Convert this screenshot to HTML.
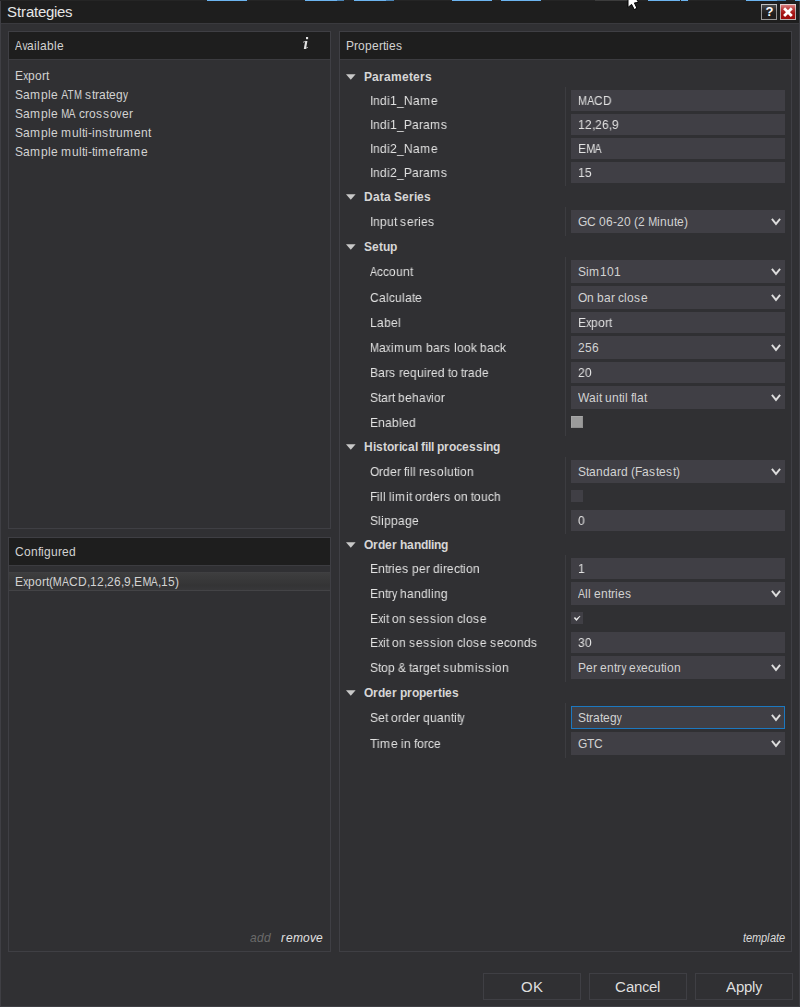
<!DOCTYPE html>
<html><head><meta charset="utf-8"><title>Strategies</title>
<style>
html,body{margin:0;padding:0;}
body{width:800px;height:1007px;overflow:hidden;background:#303033;position:relative;font-family:"Liberation Sans",sans-serif;}
.a{position:absolute;box-sizing:border-box;}
.t{white-space:nowrap;transform-origin:0 0;}
.g{will-change:transform;}
.t b{display:inline-block;font-weight:inherit;white-space:pre;transform-origin:0 0;}
svg{position:absolute;overflow:visible;}
</style></head><body>

<div class="a" style="left:0px;top:0px;width:800px;height:23px;background:#1e1e1e;"></div>
<div class="a" style="left:0px;top:0px;width:800px;height:1px;background:#252525;"></div>
<div class="a" style="left:0px;top:23px;width:800px;height:1px;background:#3a3a3e;"></div>
<div class="a" style="left:0px;top:1px;width:1px;height:1006px;background:#3f3f44;"></div>
<div class="a" style="left:799px;top:1px;width:1px;height:1006px;background:#3f3f44;"></div>
<div class="a" style="left:0px;top:1006px;width:800px;height:1px;background:#3f3f44;"></div>
<div class="a" style="left:207px;top:0px;width:40px;height:1px;background:#6cb4f0;"></div>
<div class="a" style="left:305px;top:0px;width:32px;height:1px;background:#6cb4f0;"></div>
<div class="a" style="left:337px;top:0px;width:7px;height:1px;background:#4a86b8;"></div>
<div class="a" style="left:354px;top:0px;width:32px;height:1px;background:#6cb4f0;"></div>
<div class="a" style="left:386px;top:0px;width:8px;height:1px;background:#4a86b8;"></div>
<div class="a" style="left:452px;top:0px;width:40px;height:1px;background:#6cb4f0;"></div>
<div class="a" style="left:501px;top:0px;width:40px;height:1px;background:#6cb4f0;"></div>
<div class="a" style="left:595px;top:0px;width:33px;height:1px;background:#3c3c3c;"></div>
<div class="a" style="left:648px;top:0px;width:32px;height:1px;background:#6cb4f0;"></div>
<div class="a" style="left:681px;top:0px;width:7px;height:1px;background:#6cb4f0;"></div>
<div class="a" style="left:746px;top:0px;width:31px;height:1px;background:#6cb4f0;"></div>
<div class="a" style="left:777px;top:0px;width:9px;height:1px;background:#4a86b8;"></div>
<div class="a" style="left:795px;top:0px;width:5px;height:1px;background:#6cb4f0;"></div>
<svg style="left:626px;top:0px" width="14" height="11" viewBox="0 0 14 11"><path d="M2 -1 L10.3 -1 L12.6 2.4 L8.4 2.9 L10.9 8.2 L8.3 9.6 L5.6 4.4 L2 7.4 Z" fill="#fff" stroke="#000" stroke-width="1"/></svg>
<div class="a t" style="left:7px;top:3px;height:17px;line-height:17px;font-size:15.4px;color:#e6e6e6;transform:scaleX(0.97403);"><b style="width:10.267px">S</b><b style="width:4.107px">t</b><b style="width:5.133px">r</b><b style="width:8.213px">a</b><b style="width:4.107px">t</b><b style="width:8.213px">e</b><b style="width:8.213px">g</b><b style="width:3.080px">i</b><b style="width:8.213px">e</b><b style="width:8.213px">s</b></div>
<div class="a" style="left:761px;top:4px;width:16px;height:16px;background:linear-gradient(#c4c4c4,#8e8e8e 50%,#9a9a9a);"></div>
<div class="a" style="left:762px;top:5px;width:14px;height:14px;background:linear-gradient(#4c4c4c 0,#2c2a2a 35%,#1e1c1c 70%,#221e1e);"></div>
<div class="a t" style="left:765.6px;top:4px;font-size:13px;line-height:15px;font-weight:bold;color:#fff">?</div>
<div class="a" style="left:780px;top:4px;width:16px;height:16px;background:linear-gradient(#e6d4d4,#b4a4a4 50%,#bcb4b4);"></div>
<div class="a" style="left:781px;top:5px;width:14px;height:14px;background:linear-gradient(#d88080 0,#bc3a3a 30%,#a41414 60%,#9c0c0c);"></div>
<svg style="left:780px;top:4px" width="16" height="16" viewBox="0 0 16 16"><path d="M4.1 4.2 L11.8 11.9 M11.8 4.2 L4.1 11.9" stroke="#fff" stroke-width="2.8" stroke-linecap="butt"/></svg>
<div class="a" style="left:8px;top:31px;width:323px;height:498px;box-shadow:inset 0 0 0 1px #3f3f44;"></div>
<div class="a" style="left:9px;top:32px;width:321px;height:27px;background:#1e1e1e;"></div>
<div class="a" style="left:9px;top:59px;width:321px;height:1px;background:#3c3c40;"></div>
<div class="a t" style="left:15px;top:38px;height:15px;line-height:15px;font-size:13px;color:#d2d2d2;transform:scaleX(0.92308);"><b style="width:7.583px;transform:scaleX(0.875)">A</b><b style="width:5.417px;transform:scaleX(0.833)">v</b><b style="width:7.583px">a</b><b style="width:3.250px">i</b><b style="width:3.250px">l</b><b style="width:7.583px">a</b><b style="width:7.583px">b</b><b style="width:3.250px">l</b><b style="width:7.583px">e</b></div>
<svg style="left:300px;top:34px" width="12" height="18" viewBox="0 0 12 18"><rect x="6" y="3" width="2.1" height="2.2" fill="#e6e6e6"/><path d="M5.2 6.9 L7.4 6.9 L6 15 L3.8 15 Z" fill="#e2e2e2"/><path d="M3 8.3 L5.4 7.3 M5.9 14.2 L7.9 13.3" stroke="#bdbdbd" stroke-width="0.9" fill="none"/></svg>
<div class="a t" style="left:15px;top:68px;height:15px;line-height:15px;font-size:13px;color:#d2d2d2;transform:scaleX(0.92308);"><b style="width:8.667px">E</b><b style="width:5.417px;transform:scaleX(0.833)">x</b><b style="width:7.583px">p</b><b style="width:7.583px">o</b><b style="width:4.333px">r</b><b style="width:3.250px">t</b></div>
<div class="a t" style="left:15px;top:87px;height:15px;line-height:15px;font-size:13px;color:#d2d2d2;transform:scaleX(0.92308);"><b style="width:8.667px">S</b><b style="width:7.583px">a</b><b style="width:11.917px">m</b><b style="width:7.583px">p</b><b style="width:3.250px">l</b><b style="width:7.583px">e</b><b style="width:3.250px">&nbsp;</b><b style="width:7.583px;transform:scaleX(0.875)">A</b><b style="width:6.500px;transform:scaleX(0.819)">T</b><b style="width:8.667px;transform:scaleX(0.800)">M</b><b style="width:3.250px">&nbsp;</b><b style="width:7.583px">s</b><b style="width:3.250px">t</b><b style="width:4.333px">r</b><b style="width:7.583px">a</b><b style="width:3.250px">t</b><b style="width:7.583px">e</b><b style="width:7.583px">g</b><b style="width:5.417px;transform:scaleX(0.833)">y</b></div>
<div class="a t" style="left:15px;top:106px;height:15px;line-height:15px;font-size:13px;color:#d2d2d2;transform:scaleX(0.92308);"><b style="width:8.667px">S</b><b style="width:7.583px">a</b><b style="width:11.917px">m</b><b style="width:7.583px">p</b><b style="width:3.250px">l</b><b style="width:7.583px">e</b><b style="width:3.250px">&nbsp;</b><b style="width:8.667px;transform:scaleX(0.800)">M</b><b style="width:7.583px;transform:scaleX(0.875)">A</b><b style="width:3.250px">&nbsp;</b><b style="width:6.500px">c</b><b style="width:4.333px">r</b><b style="width:7.583px">o</b><b style="width:7.583px">s</b><b style="width:7.583px">s</b><b style="width:7.583px">o</b><b style="width:5.417px;transform:scaleX(0.833)">v</b><b style="width:7.583px">e</b><b style="width:4.333px">r</b></div>
<div class="a t" style="left:15px;top:125px;height:15px;line-height:15px;font-size:13px;color:#d2d2d2;transform:scaleX(0.92308);"><b style="width:8.667px">S</b><b style="width:7.583px">a</b><b style="width:11.917px">m</b><b style="width:7.583px">p</b><b style="width:3.250px">l</b><b style="width:7.583px">e</b><b style="width:3.250px">&nbsp;</b><b style="width:11.917px">m</b><b style="width:7.583px">u</b><b style="width:3.250px">l</b><b style="width:3.250px">t</b><b style="width:3.250px">i</b><b style="width:4.333px">-</b><b style="width:3.250px">i</b><b style="width:7.583px">n</b><b style="width:7.583px">s</b><b style="width:3.250px">t</b><b style="width:4.333px">r</b><b style="width:7.583px">u</b><b style="width:11.917px">m</b><b style="width:7.583px">e</b><b style="width:7.583px">n</b><b style="width:3.250px">t</b></div>
<div class="a t" style="left:15px;top:144px;height:15px;line-height:15px;font-size:13px;color:#d2d2d2;transform:scaleX(0.92308);"><b style="width:8.667px">S</b><b style="width:7.583px">a</b><b style="width:11.917px">m</b><b style="width:7.583px">p</b><b style="width:3.250px">l</b><b style="width:7.583px">e</b><b style="width:3.250px">&nbsp;</b><b style="width:11.917px">m</b><b style="width:7.583px">u</b><b style="width:3.250px">l</b><b style="width:3.250px">t</b><b style="width:3.250px">i</b><b style="width:4.333px">-</b><b style="width:3.250px">t</b><b style="width:3.250px">i</b><b style="width:11.917px">m</b><b style="width:7.583px">e</b><b style="width:3.250px">f</b><b style="width:4.333px">r</b><b style="width:7.583px">a</b><b style="width:11.917px">m</b><b style="width:7.583px">e</b></div>
<div class="a" style="left:8px;top:537px;width:323px;height:415px;box-shadow:inset 0 0 0 1px #3f3f44;"></div>
<div class="a" style="left:9px;top:538px;width:321px;height:27px;background:#1e1e1e;"></div>
<div class="a" style="left:9px;top:565px;width:321px;height:1px;background:#3c3c40;"></div>
<div class="a t" style="left:15px;top:544px;height:15px;line-height:15px;font-size:13px;color:#d2d2d2;transform:scaleX(0.92308);"><b style="width:9.750px">C</b><b style="width:7.583px">o</b><b style="width:7.583px">n</b><b style="width:3.250px">f</b><b style="width:3.250px">i</b><b style="width:7.583px">g</b><b style="width:7.583px">u</b><b style="width:4.333px">r</b><b style="width:7.583px">e</b><b style="width:7.583px">d</b></div>
<div class="a" style="left:9px;top:572px;width:321px;height:19px;background:linear-gradient(#414143 0,#3d3d3e 8%,#343435 75%,#373739 100%);border-bottom:1px solid #434346;"></div>
<div class="a t" style="left:15px;top:574px;height:15px;line-height:15px;font-size:13px;color:#d2d2d2;transform:scaleX(0.92308);"><b style="width:8.667px">E</b><b style="width:5.417px;transform:scaleX(0.833)">x</b><b style="width:7.583px">p</b><b style="width:7.583px">o</b><b style="width:4.333px">r</b><b style="width:3.250px">t</b><b style="width:4.333px">(</b><b style="width:9.750px;transform:scaleX(0.900)">M</b><b style="width:7.583px;transform:scaleX(0.875)">A</b><b style="width:9.750px">C</b><b style="width:9.750px">D</b><b style="width:3.250px">,</b><b style="width:7.583px">1</b><b style="width:7.583px">2</b><b style="width:3.250px">,</b><b style="width:7.583px">2</b><b style="width:7.583px">6</b><b style="width:3.250px">,</b><b style="width:7.583px">9</b><b style="width:3.250px">,</b><b style="width:8.667px">E</b><b style="width:9.750px;transform:scaleX(0.900)">M</b><b style="width:7.583px;transform:scaleX(0.875)">A</b><b style="width:3.250px">,</b><b style="width:7.583px">1</b><b style="width:7.583px">5</b><b style="width:4.333px">)</b></div>
<div class="a t" style="left:250px;top:930px;height:15px;line-height:15px;font-size:13px;color:#6a6a6a;transform:scaleX(0.92308);font-style:italic;"><b style="width:7.583px">a</b><b style="width:7.583px">d</b><b style="width:7.583px">d</b></div>
<div class="a t" style="left:281px;top:930px;height:15px;line-height:15px;font-size:13px;color:#e2e2e2;transform:scaleX(0.92308);font-style:italic;"><b style="width:5.417px">r</b><b style="width:7.583px">e</b><b style="width:10.833px">m</b><b style="width:7.583px">o</b><b style="width:6.500px">v</b><b style="width:7.583px">e</b></div>
<div class="a" style="left:339px;top:31px;width:453px;height:921px;box-shadow:inset 0 0 0 1px #3f3f44;"></div>
<div class="a" style="left:340px;top:32px;width:451px;height:27px;background:#1e1e1e;"></div>
<div class="a" style="left:340px;top:59px;width:451px;height:1px;background:#3c3c40;"></div>
<div class="a t" style="left:346px;top:38px;height:15px;line-height:15px;font-size:13px;color:#d2d2d2;transform:scaleX(0.92308);"><b style="width:8.667px">P</b><b style="width:4.333px">r</b><b style="width:7.583px">o</b><b style="width:7.583px">p</b><b style="width:7.583px">e</b><b style="width:4.333px">r</b><b style="width:3.250px">t</b><b style="width:3.250px">i</b><b style="width:7.583px">e</b><b style="width:7.583px">s</b></div>
<div class="a t" style="left:743px;top:931px;height:14px;line-height:14px;font-size:12px;color:#dcdcdc;transform:scaleX(0.91667);font-style:italic;"><b style="width:3.273px">t</b><b style="width:6.545px">e</b><b style="width:9.818px">m</b><b style="width:6.545px">p</b><b style="width:3.273px">l</b><b style="width:6.545px">a</b><b style="width:3.273px">t</b><b style="width:6.545px">e</b></div>
<svg style="left:346px;top:74px" width="10" height="6" viewBox="0 0 10 6"><path d="M0 0.3 L9.6 0.3 L4.8 5.8 Z" fill="#c8c8c8"/></svg>
<div class="a t" style="left:364px;top:69px;height:15px;line-height:15px;font-size:13px;color:#d6d6d6;transform:scaleX(0.92308);font-weight:bold;"><b style="width:8.667px">P</b><b style="width:7.583px">a</b><b style="width:5.417px">r</b><b style="width:7.583px">a</b><b style="width:11.917px">m</b><b style="width:7.583px">e</b><b style="width:4.333px">t</b><b style="width:7.583px">e</b><b style="width:5.417px">r</b><b style="width:7.583px">s</b></div>
<div class="a" style="left:571px;top:90px;width:214px;height:21px;background:#403f45;"></div>
<div class="a t g" style="left:370px;top:93px;height:15px;line-height:15px;font-size:13px;color:#e2e2e2;transform:scaleX(0.92308);"><b style="width:3.250px">I</b><b style="width:7.583px">n</b><b style="width:7.583px">d</b><b style="width:3.250px">i</b><b style="width:7.583px">1</b><b style="width:7.583px">_</b><b style="width:9.750px">N</b><b style="width:7.583px">a</b><b style="width:11.917px">m</b><b style="width:7.583px">e</b></div>
<div class="a t g" style="left:578px;top:93px;height:15px;line-height:15px;font-size:13px;color:#e2e2e2;transform:scaleX(0.92308);"><b style="width:9.750px;transform:scaleX(0.900)">M</b><b style="width:7.583px;transform:scaleX(0.875)">A</b><b style="width:9.750px">C</b><b style="width:9.750px">D</b></div>
<div class="a" style="left:571px;top:114px;width:214px;height:21px;background:#403f45;"></div>
<div class="a t g" style="left:370px;top:117px;height:15px;line-height:15px;font-size:13px;color:#e2e2e2;transform:scaleX(0.92308);"><b style="width:3.250px">I</b><b style="width:7.583px">n</b><b style="width:7.583px">d</b><b style="width:3.250px">i</b><b style="width:7.583px">1</b><b style="width:7.583px">_</b><b style="width:8.667px">P</b><b style="width:7.583px">a</b><b style="width:4.333px">r</b><b style="width:7.583px">a</b><b style="width:11.917px">m</b><b style="width:7.583px">s</b></div>
<div class="a t g" style="left:578px;top:117px;height:15px;line-height:15px;font-size:13px;color:#e2e2e2;transform:scaleX(0.92308);"><b style="width:7.583px">1</b><b style="width:7.583px">2</b><b style="width:3.250px">,</b><b style="width:7.583px">2</b><b style="width:7.583px">6</b><b style="width:3.250px">,</b><b style="width:7.583px">9</b></div>
<div class="a" style="left:571px;top:138px;width:214px;height:21px;background:#403f45;"></div>
<div class="a t g" style="left:370px;top:141px;height:15px;line-height:15px;font-size:13px;color:#e2e2e2;transform:scaleX(0.92308);"><b style="width:3.250px">I</b><b style="width:7.583px">n</b><b style="width:7.583px">d</b><b style="width:3.250px">i</b><b style="width:7.583px">2</b><b style="width:7.583px">_</b><b style="width:9.750px">N</b><b style="width:7.583px">a</b><b style="width:11.917px">m</b><b style="width:7.583px">e</b></div>
<div class="a t g" style="left:578px;top:141px;height:15px;line-height:15px;font-size:13px;color:#e2e2e2;transform:scaleX(0.92308);"><b style="width:8.667px">E</b><b style="width:9.750px;transform:scaleX(0.900)">M</b><b style="width:7.583px;transform:scaleX(0.875)">A</b></div>
<div class="a" style="left:571px;top:162px;width:214px;height:21px;background:#403f45;"></div>
<div class="a t g" style="left:370px;top:165px;height:15px;line-height:15px;font-size:13px;color:#e2e2e2;transform:scaleX(0.92308);"><b style="width:3.250px">I</b><b style="width:7.583px">n</b><b style="width:7.583px">d</b><b style="width:3.250px">i</b><b style="width:7.583px">2</b><b style="width:7.583px">_</b><b style="width:8.667px">P</b><b style="width:7.583px">a</b><b style="width:4.333px">r</b><b style="width:7.583px">a</b><b style="width:11.917px">m</b><b style="width:7.583px">s</b></div>
<div class="a t g" style="left:578px;top:165px;height:15px;line-height:15px;font-size:13px;color:#e2e2e2;transform:scaleX(0.92308);"><b style="width:7.583px">1</b><b style="width:7.583px">5</b></div>
<div class="a" style="left:565px;top:87px;width:1px;height:99px;background:#3c3c40;"></div>
<svg style="left:346px;top:194px" width="10" height="6" viewBox="0 0 10 6"><path d="M0 0.3 L9.6 0.3 L4.8 5.8 Z" fill="#c8c8c8"/></svg>
<div class="a t" style="left:364px;top:189px;height:15px;line-height:15px;font-size:13px;color:#d6d6d6;transform:scaleX(0.92308);font-weight:bold;"><b style="width:9.750px">D</b><b style="width:7.583px">a</b><b style="width:4.333px">t</b><b style="width:7.583px">a</b><b style="width:3.250px">&nbsp;</b><b style="width:8.667px">S</b><b style="width:7.583px">e</b><b style="width:5.417px">r</b><b style="width:3.250px">i</b><b style="width:7.583px">e</b><b style="width:7.583px">s</b></div>
<div class="a" style="left:571px;top:210px;width:214px;height:23px;background:#403f45;"></div>
<div class="a t g" style="left:370px;top:214px;height:15px;line-height:15px;font-size:13px;color:#e2e2e2;transform:scaleX(0.92308);"><b style="width:3.250px">I</b><b style="width:7.583px">n</b><b style="width:7.583px">p</b><b style="width:7.583px">u</b><b style="width:3.250px">t</b><b style="width:3.250px">&nbsp;</b><b style="width:7.583px">s</b><b style="width:7.583px">e</b><b style="width:4.333px">r</b><b style="width:3.250px">i</b><b style="width:7.583px">e</b><b style="width:7.583px">s</b></div>
<div class="a t" style="left:578px;top:214px;height:15px;line-height:15px;font-size:13px;color:#d2d2d2;transform:scaleX(0.92308);"><b style="width:9.750px">G</b><b style="width:9.750px">C</b><b style="width:3.250px">&nbsp;</b><b style="width:7.583px">0</b><b style="width:7.583px">6</b><b style="width:4.333px">-</b><b style="width:7.583px">2</b><b style="width:7.583px">0</b><b style="width:3.250px">&nbsp;</b><b style="width:4.333px">(</b><b style="width:7.583px">2</b><b style="width:3.250px">&nbsp;</b><b style="width:9.750px;transform:scaleX(0.900)">M</b><b style="width:3.250px">i</b><b style="width:7.583px">n</b><b style="width:7.583px">u</b><b style="width:3.250px">t</b><b style="width:7.583px">e</b><b style="width:4.333px">)</b></div>
<svg style="left:770.5px;top:218px" width="10" height="8" viewBox="0 0 10 8"><path d="M0.9 0.9 L5 5.9 L9.1 0.9" fill="none" stroke="#dcdcdc" stroke-width="1.9"/></svg>
<div class="a" style="left:565px;top:207px;width:1px;height:29px;background:#3c3c40;"></div>
<svg style="left:346px;top:244px" width="10" height="6" viewBox="0 0 10 6"><path d="M0 0.3 L9.6 0.3 L4.8 5.8 Z" fill="#c8c8c8"/></svg>
<div class="a t" style="left:364px;top:239px;height:15px;line-height:15px;font-size:13px;color:#d6d6d6;transform:scaleX(0.92308);font-weight:bold;"><b style="width:8.667px">S</b><b style="width:7.583px">e</b><b style="width:4.333px">t</b><b style="width:7.583px">u</b><b style="width:7.583px">p</b></div>
<div class="a" style="left:571px;top:260px;width:214px;height:23px;background:#403f45;"></div>
<div class="a t g" style="left:370px;top:264px;height:15px;line-height:15px;font-size:13px;color:#e2e2e2;transform:scaleX(0.92308);"><b style="width:7.583px;transform:scaleX(0.875)">A</b><b style="width:6.500px">c</b><b style="width:6.500px">c</b><b style="width:7.583px">o</b><b style="width:7.583px">u</b><b style="width:7.583px">n</b><b style="width:3.250px">t</b></div>
<div class="a t" style="left:578px;top:264px;height:15px;line-height:15px;font-size:13px;color:#d2d2d2;transform:scaleX(0.92308);"><b style="width:8.667px">S</b><b style="width:3.250px">i</b><b style="width:11.917px">m</b><b style="width:7.583px">1</b><b style="width:7.583px">0</b><b style="width:7.583px">1</b></div>
<svg style="left:770.5px;top:268px" width="10" height="8" viewBox="0 0 10 8"><path d="M0.9 0.9 L5 5.9 L9.1 0.9" fill="none" stroke="#dcdcdc" stroke-width="1.9"/></svg>
<div class="a" style="left:571px;top:286px;width:214px;height:23px;background:#403f45;"></div>
<div class="a t g" style="left:370px;top:290px;height:15px;line-height:15px;font-size:13px;color:#e2e2e2;transform:scaleX(0.92308);"><b style="width:9.750px">C</b><b style="width:7.583px">a</b><b style="width:3.250px">l</b><b style="width:6.500px">c</b><b style="width:7.583px">u</b><b style="width:3.250px">l</b><b style="width:7.583px">a</b><b style="width:3.250px">t</b><b style="width:7.583px">e</b></div>
<div class="a t" style="left:578px;top:290px;height:15px;line-height:15px;font-size:13px;color:#d2d2d2;transform:scaleX(0.92308);"><b style="width:9.750px">O</b><b style="width:7.583px">n</b><b style="width:3.250px">&nbsp;</b><b style="width:7.583px">b</b><b style="width:7.583px">a</b><b style="width:4.333px">r</b><b style="width:3.250px">&nbsp;</b><b style="width:6.500px">c</b><b style="width:3.250px">l</b><b style="width:7.583px">o</b><b style="width:7.583px">s</b><b style="width:7.583px">e</b></div>
<svg style="left:770.5px;top:294px" width="10" height="8" viewBox="0 0 10 8"><path d="M0.9 0.9 L5 5.9 L9.1 0.9" fill="none" stroke="#dcdcdc" stroke-width="1.9"/></svg>
<div class="a" style="left:571px;top:312px;width:214px;height:21px;background:#403f45;"></div>
<div class="a t g" style="left:370px;top:315px;height:15px;line-height:15px;font-size:13px;color:#e2e2e2;transform:scaleX(0.92308);"><b style="width:7.583px">L</b><b style="width:7.583px">a</b><b style="width:7.583px">b</b><b style="width:7.583px">e</b><b style="width:3.250px">l</b></div>
<div class="a t g" style="left:578px;top:315px;height:15px;line-height:15px;font-size:13px;color:#e2e2e2;transform:scaleX(0.92308);"><b style="width:8.667px">E</b><b style="width:5.417px;transform:scaleX(0.833)">x</b><b style="width:7.583px">p</b><b style="width:7.583px">o</b><b style="width:4.333px">r</b><b style="width:3.250px">t</b></div>
<div class="a" style="left:571px;top:336px;width:214px;height:23px;background:#403f45;"></div>
<div class="a t g" style="left:370px;top:340px;height:15px;line-height:15px;font-size:13px;color:#e2e2e2;transform:scaleX(0.92308);"><b style="width:9.750px;transform:scaleX(0.900)">M</b><b style="width:7.583px">a</b><b style="width:5.417px;transform:scaleX(0.833)">x</b><b style="width:3.250px">i</b><b style="width:11.917px">m</b><b style="width:7.583px">u</b><b style="width:11.917px">m</b><b style="width:3.250px">&nbsp;</b><b style="width:7.583px">b</b><b style="width:7.583px">a</b><b style="width:4.333px">r</b><b style="width:7.583px">s</b><b style="width:3.250px">&nbsp;</b><b style="width:3.250px">l</b><b style="width:7.583px">o</b><b style="width:7.583px">o</b><b style="width:6.500px">k</b><b style="width:3.250px">&nbsp;</b><b style="width:7.583px">b</b><b style="width:7.583px">a</b><b style="width:6.500px">c</b><b style="width:6.500px">k</b></div>
<div class="a t" style="left:578px;top:340px;height:15px;line-height:15px;font-size:13px;color:#d2d2d2;transform:scaleX(0.92308);"><b style="width:7.583px">2</b><b style="width:7.583px">5</b><b style="width:7.583px">6</b></div>
<svg style="left:770.5px;top:344px" width="10" height="8" viewBox="0 0 10 8"><path d="M0.9 0.9 L5 5.9 L9.1 0.9" fill="none" stroke="#dcdcdc" stroke-width="1.9"/></svg>
<div class="a" style="left:571px;top:362px;width:214px;height:21px;background:#403f45;"></div>
<div class="a t g" style="left:370px;top:365px;height:15px;line-height:15px;font-size:13px;color:#e2e2e2;transform:scaleX(0.92308);"><b style="width:8.667px">B</b><b style="width:7.583px">a</b><b style="width:4.333px">r</b><b style="width:7.583px">s</b><b style="width:3.250px">&nbsp;</b><b style="width:4.333px">r</b><b style="width:7.583px">e</b><b style="width:7.583px">q</b><b style="width:7.583px">u</b><b style="width:3.250px">i</b><b style="width:4.333px">r</b><b style="width:7.583px">e</b><b style="width:7.583px">d</b><b style="width:3.250px">&nbsp;</b><b style="width:3.250px">t</b><b style="width:7.583px">o</b><b style="width:3.250px">&nbsp;</b><b style="width:3.250px">t</b><b style="width:4.333px">r</b><b style="width:7.583px">a</b><b style="width:7.583px">d</b><b style="width:7.583px">e</b></div>
<div class="a t g" style="left:578px;top:365px;height:15px;line-height:15px;font-size:13px;color:#e2e2e2;transform:scaleX(0.92308);"><b style="width:7.583px">2</b><b style="width:7.583px">0</b></div>
<div class="a" style="left:571px;top:386px;width:214px;height:23px;background:#403f45;"></div>
<div class="a t g" style="left:370px;top:390px;height:15px;line-height:15px;font-size:13px;color:#e2e2e2;transform:scaleX(0.92308);"><b style="width:8.667px">S</b><b style="width:3.250px">t</b><b style="width:7.583px">a</b><b style="width:4.333px">r</b><b style="width:3.250px">t</b><b style="width:3.250px">&nbsp;</b><b style="width:7.583px">b</b><b style="width:7.583px">e</b><b style="width:7.583px">h</b><b style="width:7.583px">a</b><b style="width:5.417px;transform:scaleX(0.833)">v</b><b style="width:3.250px">i</b><b style="width:7.583px">o</b><b style="width:4.333px">r</b></div>
<div class="a t" style="left:578px;top:390px;height:15px;line-height:15px;font-size:13px;color:#d2d2d2;transform:scaleX(0.92308);"><b style="width:11.917px">W</b><b style="width:7.583px">a</b><b style="width:3.250px">i</b><b style="width:3.250px">t</b><b style="width:3.250px">&nbsp;</b><b style="width:7.583px">u</b><b style="width:7.583px">n</b><b style="width:3.250px">t</b><b style="width:3.250px">i</b><b style="width:3.250px">l</b><b style="width:3.250px">&nbsp;</b><b style="width:3.250px">f</b><b style="width:3.250px">l</b><b style="width:7.583px">a</b><b style="width:3.250px">t</b></div>
<svg style="left:770.5px;top:394px" width="10" height="8" viewBox="0 0 10 8"><path d="M0.9 0.9 L5 5.9 L9.1 0.9" fill="none" stroke="#dcdcdc" stroke-width="1.9"/></svg>
<div class="a t g" style="left:370px;top:415px;height:15px;line-height:15px;font-size:13px;color:#e2e2e2;transform:scaleX(0.92308);"><b style="width:8.667px">E</b><b style="width:7.583px">n</b><b style="width:7.583px">a</b><b style="width:7.583px">b</b><b style="width:3.250px">l</b><b style="width:7.583px">e</b><b style="width:7.583px">d</b></div>
<div class="a" style="left:571px;top:416px;width:12px;height:12px;background:#9b9b9b;border:1px solid;border-color:#a7a7a7 #929292 #8e8e8e #a4a4a4;"></div>
<div class="a" style="left:565px;top:257px;width:1px;height:179px;background:#3c3c40;"></div>
<svg style="left:346px;top:444px" width="10" height="6" viewBox="0 0 10 6"><path d="M0 0.3 L9.6 0.3 L4.8 5.8 Z" fill="#c8c8c8"/></svg>
<div class="a t" style="left:364px;top:439px;height:15px;line-height:15px;font-size:13px;color:#d6d6d6;transform:scaleX(0.92308);font-weight:bold;"><b style="width:9.750px">H</b><b style="width:3.250px">i</b><b style="width:7.583px">s</b><b style="width:4.333px">t</b><b style="width:7.583px">o</b><b style="width:5.417px">r</b><b style="width:3.250px">i</b><b style="width:6.500px;transform:scaleX(0.899)">c</b><b style="width:7.583px">a</b><b style="width:3.250px">l</b><b style="width:3.250px">&nbsp;</b><b style="width:4.333px">f</b><b style="width:3.250px">i</b><b style="width:3.250px">l</b><b style="width:3.250px">l</b><b style="width:3.250px">&nbsp;</b><b style="width:7.583px">p</b><b style="width:5.417px">r</b><b style="width:7.583px">o</b><b style="width:6.500px;transform:scaleX(0.899)">c</b><b style="width:7.583px">e</b><b style="width:7.583px">s</b><b style="width:7.583px">s</b><b style="width:3.250px">i</b><b style="width:7.583px">n</b><b style="width:7.583px">g</b></div>
<div class="a" style="left:571px;top:460px;width:214px;height:23px;background:#403f45;"></div>
<div class="a t g" style="left:370px;top:464px;height:15px;line-height:15px;font-size:13px;color:#e2e2e2;transform:scaleX(0.92308);"><b style="width:9.750px">O</b><b style="width:4.333px">r</b><b style="width:7.583px">d</b><b style="width:7.583px">e</b><b style="width:4.333px">r</b><b style="width:3.250px">&nbsp;</b><b style="width:3.250px">f</b><b style="width:3.250px">i</b><b style="width:3.250px">l</b><b style="width:3.250px">l</b><b style="width:3.250px">&nbsp;</b><b style="width:4.333px">r</b><b style="width:7.583px">e</b><b style="width:7.583px">s</b><b style="width:7.583px">o</b><b style="width:3.250px">l</b><b style="width:7.583px">u</b><b style="width:3.250px">t</b><b style="width:3.250px">i</b><b style="width:7.583px">o</b><b style="width:7.583px">n</b></div>
<div class="a t" style="left:578px;top:464px;height:15px;line-height:15px;font-size:13px;color:#d2d2d2;transform:scaleX(0.92308);"><b style="width:8.667px">S</b><b style="width:3.250px">t</b><b style="width:7.583px">a</b><b style="width:7.583px">n</b><b style="width:7.583px">d</b><b style="width:7.583px">a</b><b style="width:4.333px">r</b><b style="width:7.583px">d</b><b style="width:3.250px">&nbsp;</b><b style="width:4.333px">(</b><b style="width:7.583px">F</b><b style="width:7.583px">a</b><b style="width:7.583px">s</b><b style="width:3.250px">t</b><b style="width:7.583px">e</b><b style="width:7.583px">s</b><b style="width:3.250px">t</b><b style="width:4.333px">)</b></div>
<svg style="left:770.5px;top:468px" width="10" height="8" viewBox="0 0 10 8"><path d="M0.9 0.9 L5 5.9 L9.1 0.9" fill="none" stroke="#dcdcdc" stroke-width="1.9"/></svg>
<div class="a t g" style="left:370px;top:489px;height:15px;line-height:15px;font-size:13px;color:#e2e2e2;transform:scaleX(0.92308);"><b style="width:7.583px">F</b><b style="width:3.250px">i</b><b style="width:3.250px">l</b><b style="width:3.250px">l</b><b style="width:3.250px">&nbsp;</b><b style="width:3.250px">l</b><b style="width:3.250px">i</b><b style="width:11.917px">m</b><b style="width:3.250px">i</b><b style="width:3.250px">t</b><b style="width:3.250px">&nbsp;</b><b style="width:7.583px">o</b><b style="width:4.333px">r</b><b style="width:7.583px">d</b><b style="width:7.583px">e</b><b style="width:4.333px">r</b><b style="width:7.583px">s</b><b style="width:3.250px">&nbsp;</b><b style="width:7.583px">o</b><b style="width:7.583px">n</b><b style="width:3.250px">&nbsp;</b><b style="width:3.250px">t</b><b style="width:7.583px">o</b><b style="width:7.583px">u</b><b style="width:6.500px">c</b><b style="width:7.583px">h</b></div>
<div class="a" style="left:571px;top:490px;width:12px;height:12px;background:#403f45;"></div>
<div class="a" style="left:571px;top:510px;width:214px;height:21px;background:#403f45;"></div>
<div class="a t g" style="left:370px;top:513px;height:15px;line-height:15px;font-size:13px;color:#e2e2e2;transform:scaleX(0.92308);"><b style="width:8.667px">S</b><b style="width:3.250px">l</b><b style="width:3.250px">i</b><b style="width:7.583px">p</b><b style="width:7.583px">p</b><b style="width:7.583px">a</b><b style="width:7.583px">g</b><b style="width:7.583px">e</b></div>
<div class="a t g" style="left:578px;top:513px;height:15px;line-height:15px;font-size:13px;color:#e2e2e2;transform:scaleX(0.92308);"><b style="width:7.583px">0</b></div>
<div class="a" style="left:565px;top:457px;width:1px;height:77px;background:#3c3c40;"></div>
<svg style="left:346px;top:542px" width="10" height="6" viewBox="0 0 10 6"><path d="M0 0.3 L9.6 0.3 L4.8 5.8 Z" fill="#c8c8c8"/></svg>
<div class="a t" style="left:364px;top:537px;height:15px;line-height:15px;font-size:13px;color:#d6d6d6;transform:scaleX(0.92308);font-weight:bold;"><b style="width:9.750px">O</b><b style="width:5.417px">r</b><b style="width:7.583px">d</b><b style="width:7.583px">e</b><b style="width:5.417px">r</b><b style="width:3.250px">&nbsp;</b><b style="width:7.583px">h</b><b style="width:7.583px">a</b><b style="width:7.583px">n</b><b style="width:7.583px">d</b><b style="width:3.250px">l</b><b style="width:3.250px">i</b><b style="width:7.583px">n</b><b style="width:7.583px">g</b></div>
<div class="a" style="left:571px;top:558px;width:214px;height:21px;background:#403f45;"></div>
<div class="a t g" style="left:370px;top:561px;height:15px;line-height:15px;font-size:13px;color:#e2e2e2;transform:scaleX(0.92308);"><b style="width:8.667px">E</b><b style="width:7.583px">n</b><b style="width:3.250px">t</b><b style="width:4.333px">r</b><b style="width:3.250px">i</b><b style="width:7.583px">e</b><b style="width:7.583px">s</b><b style="width:3.250px">&nbsp;</b><b style="width:7.583px">p</b><b style="width:7.583px">e</b><b style="width:4.333px">r</b><b style="width:3.250px">&nbsp;</b><b style="width:7.583px">d</b><b style="width:3.250px">i</b><b style="width:4.333px">r</b><b style="width:7.583px">e</b><b style="width:6.500px">c</b><b style="width:3.250px">t</b><b style="width:3.250px">i</b><b style="width:7.583px">o</b><b style="width:7.583px">n</b></div>
<div class="a t g" style="left:578px;top:561px;height:15px;line-height:15px;font-size:13px;color:#e2e2e2;transform:scaleX(0.92308);"><b style="width:7.583px">1</b></div>
<div class="a" style="left:571px;top:582px;width:214px;height:23px;background:#403f45;"></div>
<div class="a t g" style="left:370px;top:586px;height:15px;line-height:15px;font-size:13px;color:#e2e2e2;transform:scaleX(0.92308);"><b style="width:8.667px">E</b><b style="width:7.583px">n</b><b style="width:3.250px">t</b><b style="width:4.333px">r</b><b style="width:5.417px;transform:scaleX(0.833)">y</b><b style="width:3.250px">&nbsp;</b><b style="width:7.583px">h</b><b style="width:7.583px">a</b><b style="width:7.583px">n</b><b style="width:7.583px">d</b><b style="width:3.250px">l</b><b style="width:3.250px">i</b><b style="width:7.583px">n</b><b style="width:7.583px">g</b></div>
<div class="a t" style="left:578px;top:586px;height:15px;line-height:15px;font-size:13px;color:#d2d2d2;transform:scaleX(0.92308);"><b style="width:7.583px;transform:scaleX(0.875)">A</b><b style="width:3.250px">l</b><b style="width:3.250px">l</b><b style="width:3.250px">&nbsp;</b><b style="width:7.583px">e</b><b style="width:7.583px">n</b><b style="width:3.250px">t</b><b style="width:4.333px">r</b><b style="width:3.250px">i</b><b style="width:7.583px">e</b><b style="width:7.583px">s</b></div>
<svg style="left:770.5px;top:590px" width="10" height="8" viewBox="0 0 10 8"><path d="M0.9 0.9 L5 5.9 L9.1 0.9" fill="none" stroke="#dcdcdc" stroke-width="1.9"/></svg>
<div class="a t g" style="left:370px;top:611px;height:15px;line-height:15px;font-size:13px;color:#e2e2e2;transform:scaleX(0.92308);"><b style="width:8.667px">E</b><b style="width:5.417px;transform:scaleX(0.833)">x</b><b style="width:3.250px">i</b><b style="width:3.250px">t</b><b style="width:3.250px">&nbsp;</b><b style="width:7.583px">o</b><b style="width:7.583px">n</b><b style="width:3.250px">&nbsp;</b><b style="width:7.583px">s</b><b style="width:7.583px">e</b><b style="width:7.583px">s</b><b style="width:7.583px">s</b><b style="width:3.250px">i</b><b style="width:7.583px">o</b><b style="width:7.583px">n</b><b style="width:3.250px">&nbsp;</b><b style="width:6.500px">c</b><b style="width:3.250px">l</b><b style="width:7.583px">o</b><b style="width:7.583px">s</b><b style="width:7.583px">e</b></div>
<div class="a" style="left:571px;top:612px;width:12px;height:12px;background:#403f45;"></div>
<svg style="left:571px;top:612px" width="12" height="12" viewBox="0 0 12 12"><path d="M2.8 5.9 L4.1 4.9 L5.3 6.7 L8.9 3.7 L9.4 4.2 L5.5 8.9 Z" fill="#ececec"/></svg>
<div class="a" style="left:571px;top:632px;width:214px;height:21px;background:#403f45;"></div>
<div class="a t g" style="left:370px;top:635px;height:15px;line-height:15px;font-size:13px;color:#e2e2e2;transform:scaleX(0.92308);"><b style="width:8.667px">E</b><b style="width:5.417px;transform:scaleX(0.833)">x</b><b style="width:3.250px">i</b><b style="width:3.250px">t</b><b style="width:3.250px">&nbsp;</b><b style="width:7.583px">o</b><b style="width:7.583px">n</b><b style="width:3.250px">&nbsp;</b><b style="width:7.583px">s</b><b style="width:7.583px">e</b><b style="width:7.583px">s</b><b style="width:7.583px">s</b><b style="width:3.250px">i</b><b style="width:7.583px">o</b><b style="width:7.583px">n</b><b style="width:3.250px">&nbsp;</b><b style="width:6.500px">c</b><b style="width:3.250px">l</b><b style="width:7.583px">o</b><b style="width:7.583px">s</b><b style="width:7.583px">e</b><b style="width:3.250px">&nbsp;</b><b style="width:7.583px">s</b><b style="width:7.583px">e</b><b style="width:6.500px">c</b><b style="width:7.583px">o</b><b style="width:7.583px">n</b><b style="width:7.583px">d</b><b style="width:7.583px">s</b></div>
<div class="a t g" style="left:578px;top:635px;height:15px;line-height:15px;font-size:13px;color:#e2e2e2;transform:scaleX(0.92308);"><b style="width:7.583px">3</b><b style="width:7.583px">0</b></div>
<div class="a" style="left:571px;top:656px;width:214px;height:23px;background:#403f45;"></div>
<div class="a t g" style="left:370px;top:660px;height:15px;line-height:15px;font-size:13px;color:#e2e2e2;transform:scaleX(0.92308);"><b style="width:8.667px">S</b><b style="width:3.250px">t</b><b style="width:7.583px">o</b><b style="width:7.583px">p</b><b style="width:3.250px">&nbsp;</b><b style="width:8.667px">&amp;</b><b style="width:3.250px">&nbsp;</b><b style="width:3.250px">t</b><b style="width:7.583px">a</b><b style="width:4.333px">r</b><b style="width:7.583px">g</b><b style="width:7.583px">e</b><b style="width:3.250px">t</b><b style="width:3.250px">&nbsp;</b><b style="width:7.583px">s</b><b style="width:7.583px">u</b><b style="width:7.583px">b</b><b style="width:11.917px">m</b><b style="width:3.250px">i</b><b style="width:7.583px">s</b><b style="width:7.583px">s</b><b style="width:3.250px">i</b><b style="width:7.583px">o</b><b style="width:7.583px">n</b></div>
<div class="a t" style="left:578px;top:660px;height:15px;line-height:15px;font-size:13px;color:#d2d2d2;transform:scaleX(0.92308);"><b style="width:8.667px">P</b><b style="width:7.583px">e</b><b style="width:4.333px">r</b><b style="width:3.250px">&nbsp;</b><b style="width:7.583px">e</b><b style="width:7.583px">n</b><b style="width:3.250px">t</b><b style="width:4.333px">r</b><b style="width:5.417px;transform:scaleX(0.833)">y</b><b style="width:3.250px">&nbsp;</b><b style="width:7.583px">e</b><b style="width:5.417px;transform:scaleX(0.833)">x</b><b style="width:7.583px">e</b><b style="width:6.500px">c</b><b style="width:7.583px">u</b><b style="width:3.250px">t</b><b style="width:3.250px">i</b><b style="width:7.583px">o</b><b style="width:7.583px">n</b></div>
<svg style="left:770.5px;top:664px" width="10" height="8" viewBox="0 0 10 8"><path d="M0.9 0.9 L5 5.9 L9.1 0.9" fill="none" stroke="#dcdcdc" stroke-width="1.9"/></svg>
<div class="a" style="left:565px;top:555px;width:1px;height:127px;background:#3c3c40;"></div>
<svg style="left:346px;top:690px" width="10" height="6" viewBox="0 0 10 6"><path d="M0 0.3 L9.6 0.3 L4.8 5.8 Z" fill="#c8c8c8"/></svg>
<div class="a t" style="left:364px;top:685px;height:15px;line-height:15px;font-size:13px;color:#d6d6d6;transform:scaleX(0.92308);font-weight:bold;"><b style="width:9.750px">O</b><b style="width:5.417px">r</b><b style="width:7.583px">d</b><b style="width:7.583px">e</b><b style="width:5.417px">r</b><b style="width:3.250px">&nbsp;</b><b style="width:7.583px">p</b><b style="width:5.417px">r</b><b style="width:7.583px">o</b><b style="width:7.583px">p</b><b style="width:7.583px">e</b><b style="width:5.417px">r</b><b style="width:4.333px">t</b><b style="width:3.250px">i</b><b style="width:7.583px">e</b><b style="width:7.583px">s</b></div>
<div class="a" style="left:571px;top:706px;width:214px;height:23px;background:#403f45;box-shadow:inset 0 0 0 1px #1c78c0;"></div>
<div class="a t g" style="left:370px;top:710px;height:15px;line-height:15px;font-size:13px;color:#e2e2e2;transform:scaleX(0.92308);"><b style="width:8.667px">S</b><b style="width:7.583px">e</b><b style="width:3.250px">t</b><b style="width:3.250px">&nbsp;</b><b style="width:7.583px">o</b><b style="width:4.333px">r</b><b style="width:7.583px">d</b><b style="width:7.583px">e</b><b style="width:4.333px">r</b><b style="width:3.250px">&nbsp;</b><b style="width:7.583px">q</b><b style="width:7.583px">u</b><b style="width:7.583px">a</b><b style="width:7.583px">n</b><b style="width:3.250px">t</b><b style="width:3.250px">i</b><b style="width:3.250px">t</b><b style="width:5.417px;transform:scaleX(0.833)">y</b></div>
<div class="a t" style="left:578px;top:710px;height:15px;line-height:15px;font-size:13px;color:#d2d2d2;transform:scaleX(0.92308);"><b style="width:8.667px">S</b><b style="width:3.250px">t</b><b style="width:4.333px">r</b><b style="width:7.583px">a</b><b style="width:3.250px">t</b><b style="width:7.583px">e</b><b style="width:7.583px">g</b><b style="width:5.417px;transform:scaleX(0.833)">y</b></div>
<svg style="left:770.5px;top:714px" width="10" height="8" viewBox="0 0 10 8"><path d="M0.9 0.9 L5 5.9 L9.1 0.9" fill="none" stroke="#dcdcdc" stroke-width="1.9"/></svg>
<div class="a" style="left:571px;top:732px;width:214px;height:23px;background:#403f45;"></div>
<div class="a t g" style="left:370px;top:736px;height:15px;line-height:15px;font-size:13px;color:#e2e2e2;transform:scaleX(0.92308);"><b style="width:7.583px">T</b><b style="width:3.250px">i</b><b style="width:11.917px">m</b><b style="width:7.583px">e</b><b style="width:3.250px">&nbsp;</b><b style="width:3.250px">i</b><b style="width:7.583px">n</b><b style="width:3.250px">&nbsp;</b><b style="width:3.250px">f</b><b style="width:7.583px">o</b><b style="width:4.333px">r</b><b style="width:6.500px">c</b><b style="width:7.583px">e</b></div>
<div class="a t" style="left:578px;top:736px;height:15px;line-height:15px;font-size:13px;color:#d2d2d2;transform:scaleX(0.92308);"><b style="width:9.750px">G</b><b style="width:7.583px">T</b><b style="width:9.750px">C</b></div>
<svg style="left:770.5px;top:740px" width="10" height="8" viewBox="0 0 10 8"><path d="M0.9 0.9 L5 5.9 L9.1 0.9" fill="none" stroke="#dcdcdc" stroke-width="1.9"/></svg>
<div class="a" style="left:565px;top:703px;width:1px;height:55px;background:#3c3c40;"></div>
<div class="a" style="left:483px;top:973px;width:98px;height:27px;box-shadow:inset 0 0 0 1px #3f3f44;"></div>
<div class="a t" style="left:521px;top:978px;height:17px;line-height:17px;font-size:15.4px;color:#dedede;transform:scaleX(0.97403);"><b style="width:12.320px">O</b><b style="width:10.267px">K</b></div>
<div class="a" style="left:589px;top:973px;width:98px;height:27px;box-shadow:inset 0 0 0 1px #3f3f44;"></div>
<div class="a t" style="left:615px;top:978px;height:17px;line-height:17px;font-size:15.4px;color:#dedede;transform:scaleX(0.97403);"><b style="width:11.293px">C</b><b style="width:8.213px">a</b><b style="width:8.213px">n</b><b style="width:7.187px;transform:scaleX(0.933)">c</b><b style="width:8.213px">e</b><b style="width:3.080px">l</b></div>
<div class="a" style="left:695px;top:973px;width:98px;height:27px;box-shadow:inset 0 0 0 1px #3f3f44;"></div>
<div class="a t" style="left:726px;top:978px;height:17px;line-height:17px;font-size:15.4px;color:#dedede;transform:scaleX(0.97403);"><b style="width:10.267px">A</b><b style="width:8.213px">p</b><b style="width:8.213px">p</b><b style="width:3.080px">l</b><b style="width:7.187px;transform:scaleX(0.933)">y</b></div>
</body></html>
